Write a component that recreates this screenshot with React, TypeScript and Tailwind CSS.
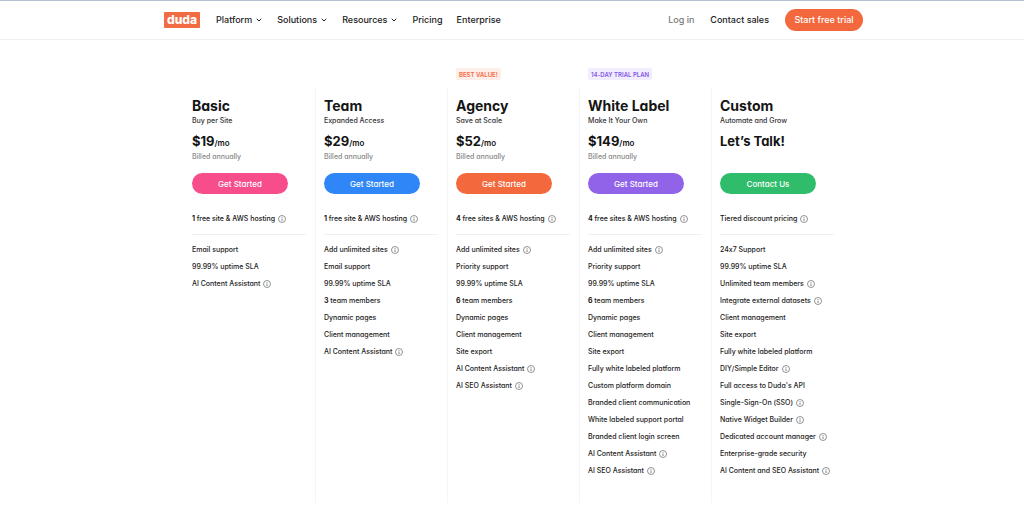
import { ChevronDown } from "lucide-react";

type Feature = { text: string; strong?: string; info?: boolean };

type Plan = {
  name: string;
  tagline: string;
  price: string;
  monthly: boolean;
  cta: string;
  buttonClass: string;
  badge?: string;
  badgeClass?: string;
  headline: Feature;
  features: Feature[];
};

const plans: Plan[] = [
  {
    name: "Basic",
    tagline: "Buy per Site",
    price: "$19",
    monthly: true,
    cta: "Get Started",
    buttonClass: "bg-[#f74d8a]",
    headline: { strong: "1", text: "free site & AWS hosting", info: true },
    features: [
      { text: "Email support" },
      { text: "99.99% uptime SLA" },
      { text: "AI Content Assistant", info: true },
    ],
  },
  {
    name: "Team",
    tagline: "Expanded Access",
    price: "$29",
    monthly: true,
    cta: "Get Started",
    buttonClass: "bg-[#2f86f6]",
    headline: { strong: "1", text: "free site & AWS hosting", info: true },
    features: [
      { text: "Add unlimited sites", info: true },
      { text: "Email support" },
      { text: "99.99% uptime SLA" },
      { strong: "3", text: "team members" },
      { text: "Dynamic pages" },
      { text: "Client management" },
      { text: "AI Content Assistant", info: true },
    ],
  },
  {
    name: "Agency",
    tagline: "Save at Scale",
    price: "$52",
    monthly: true,
    cta: "Get Started",
    buttonClass: "bg-[#f4683d]",
    badge: "BEST VALUE!",
    badgeClass: "bg-[#fdeee9] text-[#f4683d]",
    headline: { strong: "4", text: "free sites & AWS hosting", info: true },
    features: [
      { text: "Add unlimited sites", info: true },
      { text: "Priority support" },
      { text: "99.99% uptime SLA" },
      { strong: "6", text: "team members" },
      { text: "Dynamic pages" },
      { text: "Client management" },
      { text: "Site export" },
      { text: "AI Content Assistant", info: true },
      { text: "AI SEO Assistant", info: true },
    ],
  },
  {
    name: "White Label",
    tagline: "Make It Your Own",
    price: "$149",
    monthly: true,
    cta: "Get Started",
    buttonClass: "bg-[#9063e8]",
    badge: "14-DAY TRIAL PLAN",
    badgeClass: "bg-[#f1edfd] text-[#8458e6]",
    headline: { strong: "4", text: "free sites & AWS hosting", info: true },
    features: [
      { text: "Add unlimited sites", info: true },
      { text: "Priority support" },
      { text: "99.99% uptime SLA" },
      { strong: "6", text: "team members" },
      { text: "Dynamic pages" },
      { text: "Client management" },
      { text: "Site export" },
      { text: "Fully white labeled platform" },
      { text: "Custom platform domain" },
      { text: "Branded client communication" },
      { text: "White labeled support portal" },
      { text: "Branded client login screen" },
      { text: "AI Content Assistant", info: true },
      { text: "AI SEO Assistant", info: true },
    ],
  },
  {
    name: "Custom",
    tagline: "Automate and Grow",
    price: "Let’s Talk!",
    monthly: false,
    cta: "Contact Us",
    buttonClass: "bg-[#2fbd6c]",
    headline: { text: "Tiered discount pricing", info: true },
    features: [
      { text: "24x7 Support" },
      { text: "99.99% uptime SLA" },
      { text: "Unlimited team members", info: true },
      { text: "Integrate external datasets", info: true },
      { text: "Client management" },
      { text: "Site export" },
      { text: "Fully white labeled platform" },
      { text: "DIY/Simple Editor", info: true },
      { text: "Full access to Duda's API" },
      { text: "Single-Sign-On (SSO)", info: true },
      { text: "Native Widget Builder", info: true },
      { text: "Dedicated account manager", info: true },
      { text: "Enterprise-grade security" },
      { text: "AI Content and SEO Assistant", info: true },
    ],
  },
];

function InfoIcon() {
  return (
    <svg viewBox="0 0 16 16" className="size-2 shrink-0 text-[#666]" fill="none" stroke="currentColor" aria-hidden="true">
      <circle cx="8" cy="8" r="7" strokeWidth="1.4" />
      <path d="M8 7v5M8 4v1.6" strokeWidth="1.6" />
    </svg>
  );
}

function FeatureText({ feature }: { feature: Feature }) {
  return (
    <span className="flex items-center gap-[3px] whitespace-nowrap">
      <span>
        {feature.strong && <strong className="font-bold">{feature.strong} </strong>}
        {feature.text}
      </span>
      {feature.info && <InfoIcon />}
    </span>
  );
}

function Header() {
  return (
    <header className="border-t border-b border-t-[#b3c0cf] border-b-[#f0f0f1]">
      <div className="mx-auto flex h-[38px] max-w-[702px] items-center text-[9px] font-medium text-[#222]">
        <a
          href="#"
          className="mr-4 ml-[3px] flex h-4 w-9 items-center justify-center rounded-[1px] bg-[#f26b43] pb-px text-[12px] font-extrabold text-white"
        >
          duda
        </a>
        <nav className="flex items-center gap-[14px]">
          {["Platform", "Solutions", "Resources"].map((label) => (
            <button key={label} className="flex items-center gap-[3px]">
              {label}
              <ChevronDown className="size-2" strokeWidth={3} />
            </button>
          ))}
          <a href="#">Pricing</a>
          <a href="#">Enterprise</a>
        </nav>
        <div className="ml-auto flex items-center gap-4">
          <a href="#" className="text-[#777]">Log in</a>
          <a href="#">Contact sales</a>
          <button className="h-[22px] w-[78px] rounded-full bg-[#f4683d] text-white">Start free trial</button>
        </div>
      </div>
    </header>
  );
}

function PlanColumn({ plan, first }: { plan: Plan; first: boolean }) {
  return (
    <section className="flex flex-col">
      <div className="h-5 pl-[9px]">
        {plan.badge && (
          <span className={`flex h-3 w-fit items-center rounded-[2px] px-[3px] text-[6px] font-semibold ${plan.badgeClass}`}>
            {plan.badge}
          </span>
        )}
      </div>
      <div className={`flex-1 border-l pt-[9px] pr-[9px] pb-6 pl-2 ${first ? "border-transparent" : "border-[#f5f5f7]"}`}>
        <h2 className="text-[14px] leading-[18px] font-bold whitespace-nowrap">{plan.name}</h2>
        <p className="text-[7px] leading-3 font-medium text-[#333]">{plan.tagline}</p>
        <p className="mt-[6px] flex h-4 items-baseline text-[13px] leading-4 font-bold">
          {plan.price}
          {plan.monthly && <span className="text-[8px] font-semibold">/mo</span>}
        </p>
        <p className="mt-0.5 h-3 text-[7px] leading-3 font-medium text-[#888]">{plan.monthly && "Billed annually"}</p>
        <button className={`mt-[10px] block h-[21px] w-24 rounded-full text-[8px] font-medium text-white ${plan.buttonClass}`}>
          {plan.cta}
        </button>
        <div className="mt-[17px] border-b border-[#f0f0f2] pb-[7px] text-[7px] leading-4 font-medium">
          <FeatureText feature={plan.headline} />
        </div>
        <ul className="mt-[6px] text-[7px] leading-[17px] font-medium text-[#222]">
          {plan.features.map((feature) => (
            <li key={feature.text}>
              <FeatureText feature={feature} />
            </li>
          ))}
        </ul>
      </div>
    </section>
  );
}

export default function App() {
  return (
    <div className="bg-white font-['Inter',sans-serif] text-[#151515]">
      <Header />
      <main className="mx-auto grid max-w-[662px] grid-cols-5 pt-7 pb-[11px] pl-0.5 [font-feature-settings:'calt'_0,'cv11'_1]">
        {plans.map((plan, index) => (
          <PlanColumn key={plan.name} plan={plan} first={index === 0} />
        ))}
      </main>
    </div>
  );
}
